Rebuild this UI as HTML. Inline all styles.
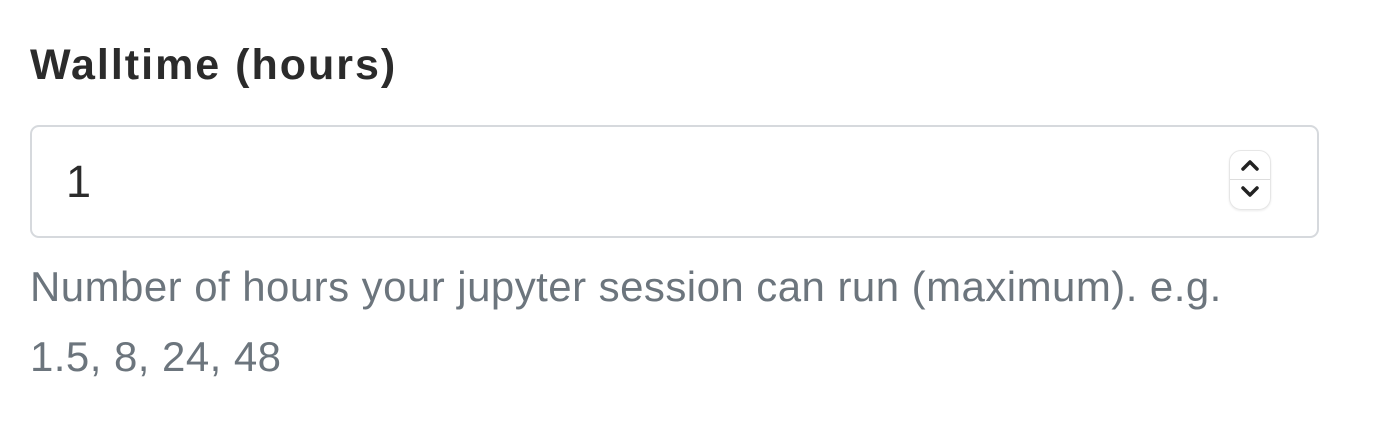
<!DOCTYPE html>
<html><head><style>
html,body{margin:0;padding:0;background:#fff;width:1394px;height:422px;overflow:hidden}
body{font-family:"Liberation Sans",Arial,sans-serif;position:relative}
.lbl{position:absolute;left:30px;top:42px;font-size:43px;font-weight:bold;color:#2b2b2b;line-height:46px;white-space:nowrap;letter-spacing:2px}
.box{position:absolute;left:30px;top:125px;width:1285px;height:109px;border:2px solid #d6d9dd;border-radius:9px}
.val{position:absolute;left:66px;top:157px;font-size:45px;color:#2b2b2b;line-height:50px}
.spin{position:absolute;left:1229px;top:150px;width:40px;height:58px;border:1px solid #e6e6e6;border-radius:12px;box-shadow:0 1px 2px rgba(0,0,0,.08)}
.spin .mid{position:absolute;left:0;right:0;top:28px;border-top:1px solid #ddd}
.help{position:absolute;left:30px;top:252px;font-size:42px;color:#6c757d;line-height:70px;white-space:nowrap;letter-spacing:0.45px}
</style></head><body>
<div class="lbl">Walltime (hours)</div>
<div class="box"></div>
<div class="val">1</div>
<div class="spin"><div class="mid"></div>
<svg width="40" height="58" style="position:absolute;left:0;top:0"><path d="M13 18 L20 11 L27 18" fill="none" stroke="#222" stroke-width="3.5" stroke-linecap="round" stroke-linejoin="round"/><path d="M13 37 L20 44 L27 37" fill="none" stroke="#222" stroke-width="3.5" stroke-linecap="round" stroke-linejoin="round"/></svg></div>
<div class="help">Number of hours your jupyter session can run (maximum). e.g.<br>1.5, 8, 24, 48</div>
</body></html>
